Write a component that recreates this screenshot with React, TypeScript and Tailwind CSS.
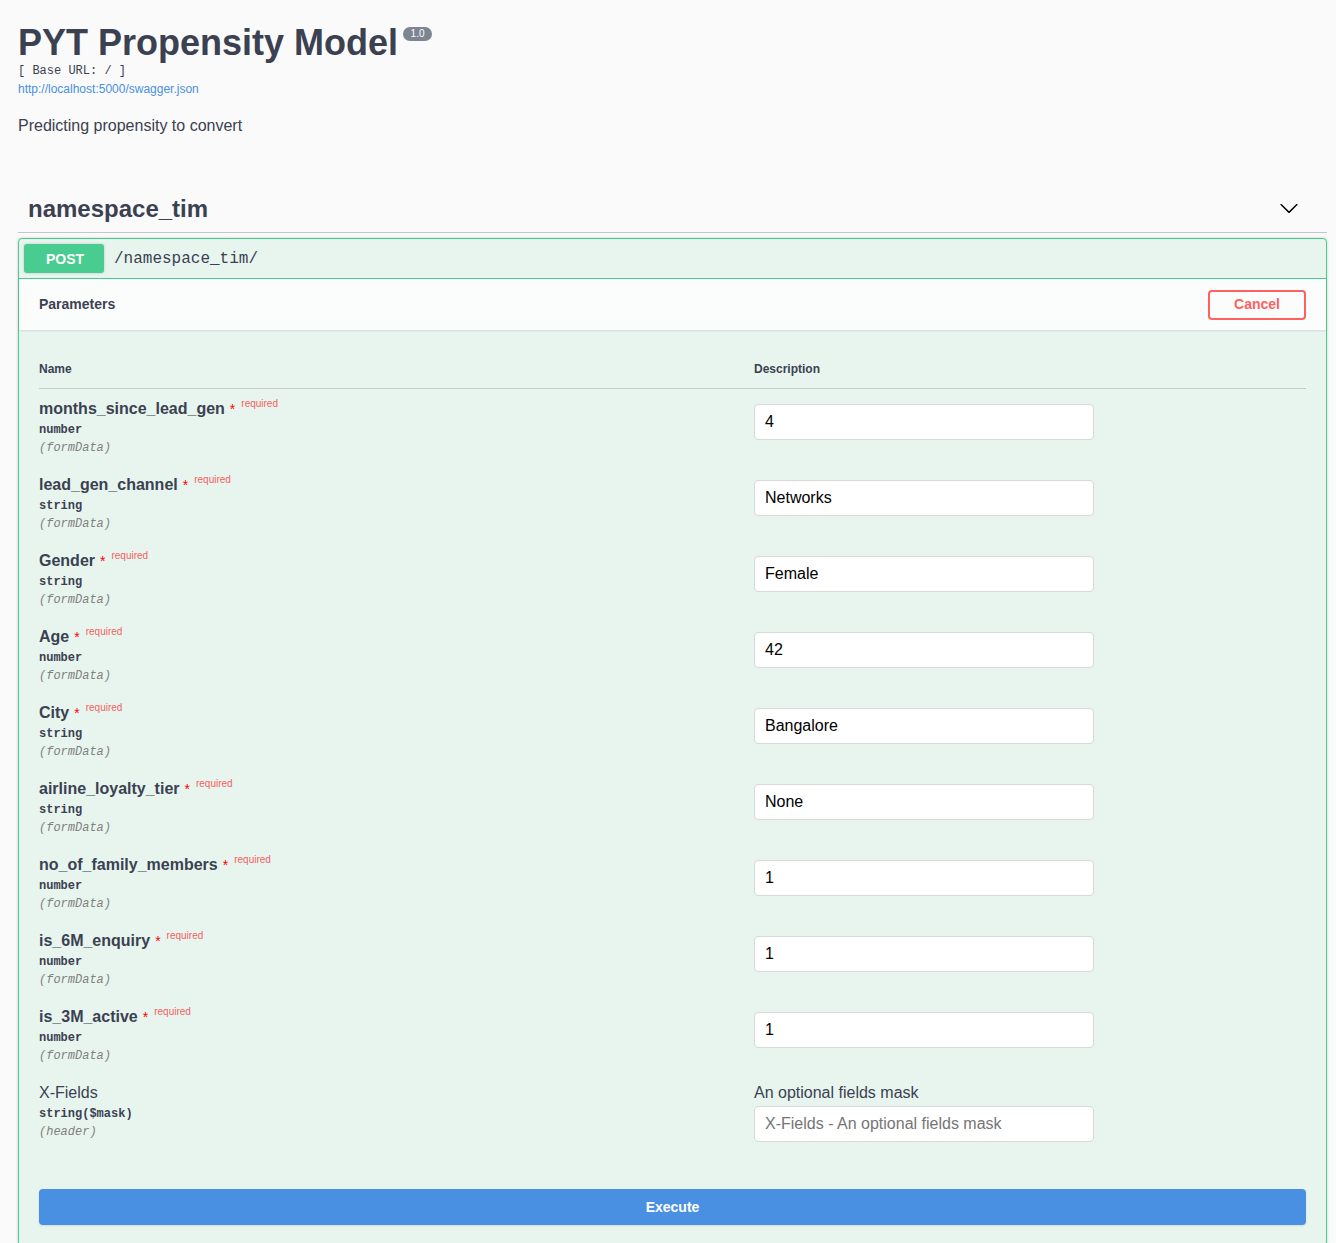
import React from "react";

const SANS = { fontFamily: '"Liberation Sans", Arial, sans-serif' };

type Param = { name: string; type: string; value: string };

const params: Param[] = [
  { name: "months_since_lead_gen", type: "number", value: "4" },
  { name: "lead_gen_channel", type: "string", value: "Networks" },
  { name: "Gender", type: "string", value: "Female" },
  { name: "Age", type: "number", value: "42" },
  { name: "City", type: "string", value: "Bangalore" },
  { name: "airline_loyalty_tier", type: "string", value: "None" },
  { name: "no_of_family_members", type: "number", value: "1" },
  { name: "is_6M_enquiry", type: "number", value: "1" },
  { name: "is_3M_active", type: "number", value: "1" },
];

function Row({ p }: { p: Param }) {
  return (
    <div className="grid grid-cols-[715px_1fr] py-[10px]">
      <div>
        <div className="mt-[1px] flex items-start text-[16px] leading-[18px] font-bold text-[#3b4151]">
          <span>{p.name}</span>
          <span className="text-[#ff0000] font-normal ml-[5px] text-[14px] leading-[18px]">*</span>
          <span className="text-[10px] font-normal leading-[10px] text-[#f36160] ml-[6px] mt-[-1px]">required</span>
        </div>
        <div className="font-['Liberation_Mono','Courier_New',monospace] text-[12px] leading-[14px] font-semibold text-[#3b4151] pt-[5px] pb-[4px]">
          {p.type}
        </div>
        <div className="font-['Liberation_Mono','Courier_New',monospace] text-[12px] leading-[14px] italic text-[#808080]">
          (formData)
        </div>
      </div>
      <div>
        <input
          readOnly
          value={p.value}
          className="mt-[5px] block w-[340px] h-[36px] bg-white border border-[#d9d9d9] rounded-[4px] px-[10px] text-[16px] text-black outline-none"
          style={SANS}
        />
      </div>
    </div>
  );
}

export default function App() {
  return (
    <div className="min-h-[1243px] bg-[#fafafa] text-[#3b4151]" style={SANS}>
      <div className="pl-[18px] pr-[9px]">
        {/* Info */}
        <div className="pt-[22px]">
          <div className="flex items-start">
            <h2 className="text-[36px] leading-[41px] font-bold text-[#3b4151] m-0">PYT Propensity Model</h2>
            <span className="ml-[5px] mt-[5px] bg-[#7d8492] rounded-[57px] px-[4px] py-[2px] text-white text-[10px] leading-[10px] w-[29px] text-center">
              1.0
            </span>
          </div>
          <div className="mt-[1px] font-['Liberation_Mono','Courier_New',monospace] text-[12px] leading-[14px] text-[#3b4151]">
            [ Base URL: / ]
          </div>
          <div className="mt-[4px] text-[12px] leading-[14px] text-[#4990e2]">http://localhost:5000/swagger.json</div>
          <div className="mt-[21px] text-[16px] leading-[18px] text-[#3b4151]">Predicting propensity to convert</div>
        </div>

        {/* Tag header */}
        <div className="mt-[49px] mb-[5px] flex items-center justify-between pl-[10px] pr-[27px] pt-[11px] pb-[9px] border-b border-[#c4c6cb]">
          <h3 className="text-[24px] leading-[28px] font-bold text-[#3b4151]">namespace_tim</h3>
          <svg width="20" height="20" viewBox="0 0 20 20" className="mt-[-3px] mr-[1px]">
            <path
              fill="#000"
              d="M17.418 6.109c.272-.268.709-.268.979 0s.271.701 0 .969l-7.908 7.83c-.27.268-.707.268-.979 0l-7.908-7.83c-.27-.268-.27-.701 0-.969.271-.268.709-.268.979 0L10 13.25l7.418-7.141z"
            />
          </svg>
        </div>

        {/* Opblock */}
        <div className="border border-[#49cc90] rounded-[4px] bg-[#e8f5ef] shadow-[0_0_3px_rgba(0,0,0,0.19)]">
          <div className="flex items-center p-[5px] border-b border-[#49cc90]">
            <div className="w-[80px] h-[29px] rounded-[3px] bg-[#49cc90] text-white text-[14px] font-bold flex items-center justify-center pl-[2px] pt-[1px] shadow-[0_0_3px_rgba(0,0,0,0.19)]">
              POST
            </div>
            <div className="ml-[10px] font-['Liberation_Mono','Courier_New',monospace] text-[16px] text-[#3b4151]">
              /namespace_tim/
            </div>
          </div>

          <div className="h-[51px] flex items-center justify-between px-[20px] bg-[#fbfdfc] shadow-[0_1px_2px_rgba(0,0,0,0.1)]">
            <h4 className="text-[14px] font-bold text-[#3b4151]">Parameters</h4>
            <div className="w-[98px] h-[30px] border-2 border-[#ff6060] rounded-[4px] flex items-center justify-center text-[14px] font-bold text-[#ff6060] bg-transparent">
              Cancel
            </div>
          </div>

          <div className="px-[20px] pt-[20px]">
            <div className="grid grid-cols-[715px_1fr] py-[12px] border-b border-[#c5cac9] text-[12px] leading-[14px] font-bold text-[#3b4151]">
              <div>Name</div>
              <div>Description</div>
            </div>
            {params.map((p) => (
              <Row key={p.name} p={p} />
            ))}
            <div className="grid grid-cols-[715px_1fr] py-[10px]">
              <div>
                <div className="mt-[1px] text-[16px] leading-[18px] text-[#3b4151]">X-Fields</div>
                <div className="font-['Liberation_Mono','Courier_New',monospace] text-[12px] leading-[14px] font-semibold text-[#3b4151] pt-[5px] pb-[4px]">
                  string($mask)
                </div>
                <div className="font-['Liberation_Mono','Courier_New',monospace] text-[12px] leading-[14px] italic text-[#808080]">
                  (header)
                </div>
              </div>
              <div>
                <div className="mt-[1px] text-[16px] leading-[18px] text-[#3b4151]">An optional fields mask</div>
                <input
                  readOnly
                  placeholder="X-Fields - An optional fields mask"
                  className="mt-[4px] block w-[340px] h-[36px] bg-white border border-[#d9d9d9] rounded-[4px] px-[10px] text-[16px] text-black placeholder:text-[#757575] outline-none"
                  style={SANS}
                />
              </div>
            </div>
            <div className="pt-[37px] pb-[20px]">
              <div className="h-[36px] w-full rounded-[4px] bg-[#4990e2] text-white text-[14px] font-bold flex items-center justify-center shadow-[0_1px_2px_rgba(0,0,0,0.1)]">
                Execute
              </div>
            </div>
          </div>
        </div>
      </div>
    </div>
  );
}
